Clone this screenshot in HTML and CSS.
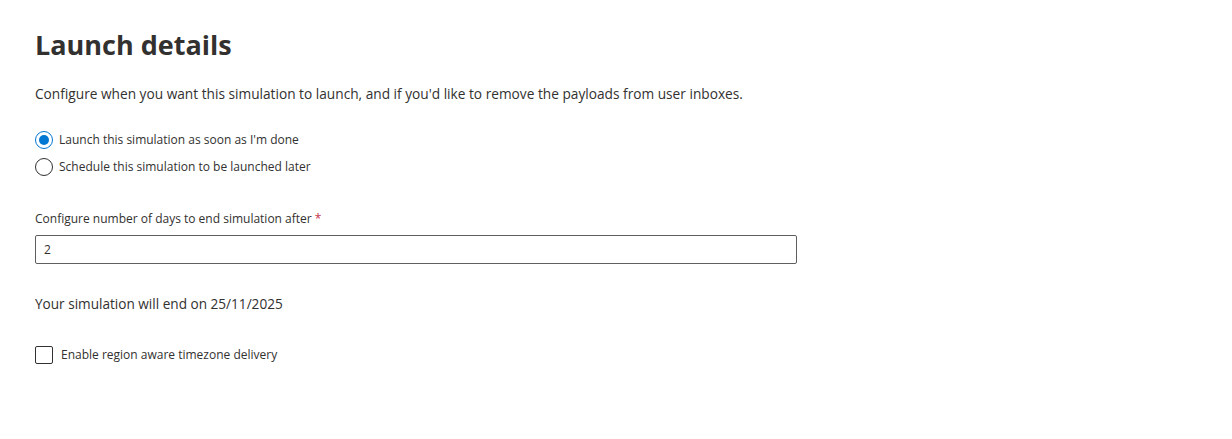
FILE: index.html
```html
<!DOCTYPE html>
<html lang="en">
<head>
<meta charset="utf-8">
<title>Launch details</title>
<link rel="stylesheet" href="styles.css">
</head>
<body>
<main class="page">
  <h1 class="title">Launch details</h1>
  <p class="desc">Configure when you want this simulation to launch, and if you'd like to remove the payloads from user inboxes.</p>
  <div class="radios">
    <label class="radio"><span class="radio-dot checked"></span><span>Launch this simulation as soon as I'm done</span></label>
    <label class="radio"><span class="radio-dot"></span><span>Schedule this simulation to be launched later</span></label>
  </div>
  <div class="field">
    <div class="field-label">Configure number of days to end simulation after <span class="req">*</span></div>
    <div class="input">2</div>
  </div>
  <p class="end">Your simulation will end on 25/11/2025</p>
  <label class="check"><span class="box"></span><span>Enable region aware timezone delivery</span></label>
</main>
</body>
</html>
```
FILE: styles.css
```css
* { box-sizing: border-box; }
html, body { margin: 0; padding: 0; background: #fff; }
body {
  font-family: "Open Sans", "Noto Sans", "Liberation Sans", sans-serif;
  color: #323130;
}
.page {
  padding: 25px 35px 0;
  display: flex;
  flex-direction: column;
}
.title {
  margin: 0;
  font-size: 27px;
  font-weight: 700;
  line-height: 40px;
  color: #323130;
}
.desc {
  margin: 19px 0 0;
  font-size: 13.7px;
  line-height: 20px;
}
.radios {
  margin-top: 26px;
  display: flex;
  flex-direction: column;
  gap: 7px;
}
.radio {
  display: flex;
  align-items: center;
  gap: 6px;
  font-size: 12px;
  line-height: 20px;
}
.radio-dot {
  width: 18px;
  height: 18px;
  border: 1px solid #323130;
  border-radius: 50%;
  position: relative;
}
.radio-dot.checked { border-color: #0078d4; }
.radio-dot.checked::after {
  content: "";
  position: absolute;
  left: 3px; top: 3px;
  width: 10px; height: 10px;
  border-radius: 50%;
  background: #0078d4;
}
.field { margin-top: 32px; }
.field-label {
  font-size: 12px;
  line-height: 20px;
}
.req { color: #c4314b; }
.input {
  margin-top: 6px;
  width: 762px;
  height: 29px;
  border: 1px solid #605e5c;
  border-radius: 2px;
  padding: 0 8px;
  font-size: 12px;
  line-height: 27px;
}
.end {
  margin: 30px 0 0;
  font-size: 13.6px;
  line-height: 20px;
}
.check {
  margin-top: 31px;
  display: flex;
  align-items: center;
  gap: 8px;
  font-size: 12px;
  line-height: 20px;
}
.box {
  width: 18px;
  height: 18px;
  border: 1px solid #323130;
  border-radius: 2px;
}
```
